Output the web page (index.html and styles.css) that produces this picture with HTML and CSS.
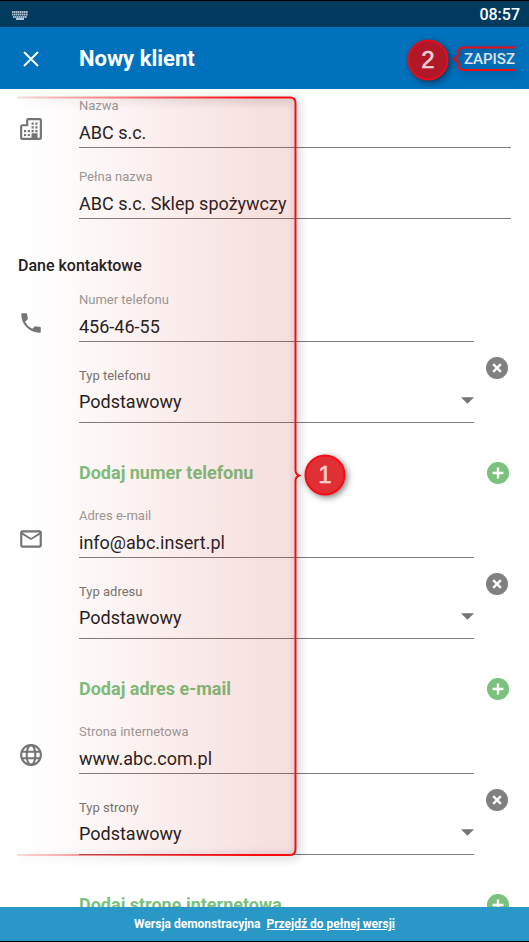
FILE: index.html
```html
<!DOCTYPE html>
<html lang="pl">
<head>
<meta charset="utf-8">
<meta name="viewport" content="width=device-width, initial-scale=1">
<title>Nowy klient</title>
<link rel="stylesheet" href="styles.css">
</head>
<body>
<div class="status">
  <svg class="keyboard" viewBox="0 0 16 9" aria-hidden="true">
    <path d="M0 1h16M0 3.5h16M1 6h14" stroke="#a9bccb" stroke-width="1.8" stroke-dasharray="1.600 .4"/>
    <path d="M4 8h8" stroke="#e5ecf0" stroke-width="1.6"/>
  </svg>
  <time>08:57</time>
</div>

<form class="screen">
  <header class="bar">
    <button type="button" class="close" aria-label="Zamknij">
      <svg viewBox="0 0 16 16"><path d="M1 1l14 14M15 1L1 15" stroke="#fff" stroke-width="2"/></svg>
    </button>
    <h1>Nowy klient</h1>
    <button type="submit" class="save">ZAPISZ</button>
    <svg class="callout callout-save" viewBox="0 0 124 62" aria-hidden="true">
      <path class="callout-line" d="M113 20.500H61Q56 20.500 55 25V28Q54 31.500 50 32Q54 32.500 55 36V38Q56 43 61 43H113"/>
      <circle class="callout-dot callout-dot-dark" cx="25" cy="33" r="19.500"/>
      <text class="callout-number callout-number-dark" x="25" y="41">2</text>
    </svg>
  </header>

  <main class="content">
    <section class="group wide">
      <svg class="icon" viewBox="0 0 24 24" aria-hidden="true">
        <path d="M8.500 8.500V4Q8.500 2.900 9.600 2.900H20Q21.100 2.900 21.100 4V20Q21.100 21.100 20 21.100H4Q2.900 21.100 2.900 20V10Q2.900 8.500 4 8.500H8.500Z" fill="none" stroke="currentColor" stroke-width="2"/>
        <path d="M12.500 6h2v2h-2zM16 6h2v2h-2zM12.500 9.500h2v2h-2zM16 9.500h2v2h-2zM5.500 13h2v2h-2zM9 13h2v2H9zM12.500 13h2v2h-2zM16 13h2v2h-2zM5.500 16.500h2v2h-2zM9 16.500h2v2H9zM12.500 16h5.500V21h-5.500z" fill="currentColor"/>
      </svg>
      <div class="field">
        <label for="name">Nazwa</label>
        <input id="name" type="text" value="ABC s.c.">
      </div>
      <div class="field next">
        <label for="full">Pełna nazwa</label>
        <input id="full" type="text" value="ABC s.c. Sklep spożywczy">
      </div>
    </section>

    <h2>Dane kontaktowe</h2>

    <section class="group">
      <svg class="icon" viewBox="0 0 24 24" aria-hidden="true"><path fill="currentColor" d="M6.620 10.790c1.440 2.830 3.760 5.140 6.590 6.590l2.200-2.200c.27-.27.67-.36 1.020-.24 1.120.37 2.330.57 3.570.57.55 0 1 .45 1 1V20c0 .55-.45 1-1 1-9.390 0-17-7.610-17-17 0-.55.45-1 1-1h3.500c.55 0 1 .45 1 1 0 1.250.2 2.450.57 3.570.11.35.03.74-.25 1.020l-2.200 2.200z"/></svg>
      <div class="field">
        <label for="phone">Numer telefonu</label>
        <input id="phone" type="tel" value="456-46-55">
      </div>
      <div class="field choice">
        <label for="phone-type">Typ telefonu</label>
        <select id="phone-type"><option>Podstawowy</option></select>
        <svg class="arrow" viewBox="0 0 12 6" aria-hidden="true"><path d="M0 0h12L6 6z" fill="currentColor"/></svg>
      </div>
      <button type="button" class="remove" aria-label="Usuń numer telefonu">
        <svg viewBox="0 0 24 24"><circle cx="12" cy="12" r="10.200" fill="#808080"/><path d="M8.500 8.500l7 7M15.500 8.500l-7 7" stroke="#fff" stroke-width="2.200"/></svg>
      </button>
      <button type="button" class="add">Dodaj numer telefonu
        <svg viewBox="0 0 24 24" aria-hidden="true"><circle cx="12" cy="12" r="10.200" fill="#7bc17e"/><path d="M12 7v10M7 12h10" stroke="#fff" stroke-width="2.200"/></svg>
      </button>
    </section>

    <section class="group">
      <svg class="icon" viewBox="0 0 24 24" aria-hidden="true"><path fill="currentColor" d="M20 4H4c-1.100 0-2 .9-2 2v12c0 1.100.9 2 2 2h16c1.100 0 2-.9 2-2V6c0-1.100-.9-2-2-2zm0 14H4V8l8 5 8-5v10zm-8-7L4 6h16l-8 5z"/></svg>
      <div class="field">
        <label for="mail">Adres e-mail</label>
        <input id="mail" type="email" value="info@abc.insert.pl">
      </div>
      <div class="field choice">
        <label for="mail-type">Typ adresu</label>
        <select id="mail-type"><option>Podstawowy</option></select>
        <svg class="arrow" viewBox="0 0 12 6" aria-hidden="true"><path d="M0 0h12L6 6z" fill="currentColor"/></svg>
      </div>
      <button type="button" class="remove" aria-label="Usuń adres e-mail">
        <svg viewBox="0 0 24 24"><circle cx="12" cy="12" r="10.200" fill="#808080"/><path d="M8.500 8.500l7 7M15.500 8.500l-7 7" stroke="#fff" stroke-width="2.200"/></svg>
      </button>
      <button type="button" class="add">Dodaj adres e-mail
        <svg viewBox="0 0 24 24" aria-hidden="true"><circle cx="12" cy="12" r="10.200" fill="#7bc17e"/><path d="M12 7v10M7 12h10" stroke="#fff" stroke-width="2.200"/></svg>
      </button>
    </section>

    <section class="group">
      <svg class="icon" viewBox="0 0 24 24" aria-hidden="true"><g fill="none" stroke="currentColor" stroke-width="1.900"><circle cx="12" cy="12" r="9.100"/><ellipse cx="12" cy="12" rx="4" ry="9.100"/><path d="M3.500 9h17M3.500 15h17"/></g></svg>
      <div class="field">
        <label for="web">Strona internetowa</label>
        <input id="web" type="text" value="www.abc.com.pl">
      </div>
      <div class="field choice">
        <label for="web-type">Typ strony</label>
        <select id="web-type"><option>Podstawowy</option></select>
        <svg class="arrow" viewBox="0 0 12 6" aria-hidden="true"><path d="M0 0h12L6 6z" fill="currentColor"/></svg>
      </div>
      <button type="button" class="remove" aria-label="Usuń stronę internetową">
        <svg viewBox="0 0 24 24"><circle cx="12" cy="12" r="10.200" fill="#808080"/><path d="M8.500 8.500l7 7M15.500 8.500l-7 7" stroke="#fff" stroke-width="2.200"/></svg>
      </button>
      <button type="button" class="add">Dodaj stronę internetową
        <svg viewBox="0 0 24 24" aria-hidden="true"><circle cx="12" cy="12" r="10.200" fill="#7bc17e"/><path d="M12 7v10M7 12h10" stroke="#fff" stroke-width="2.200"/></svg>
      </button>
    </section>

    <svg class="callout callout-form" viewBox="0 0 360 790" aria-hidden="true">
      <defs>
        <linearGradient id="wash" gradientUnits="userSpaceOnUse" x1="17" y1="0" x2="296" y2="0">
          <stop offset="0" stop-color="#c8352b" stop-opacity="0"/>
          <stop offset=".17" stop-color="#c8352b" stop-opacity=".02"/>
          <stop offset=".9" stop-color="#c8352b" stop-opacity=".15"/>
          <stop offset="1" stop-color="#c8352b" stop-opacity=".15"/>
        </linearGradient>
        <linearGradient id="edge" gradientUnits="userSpaceOnUse" x1="17" y1="0" x2="296" y2="0">
          <stop offset="0" stop-color="#fb0a10" stop-opacity=".15"/>
          <stop offset=".85" stop-color="#fb0a10"/>
        </linearGradient>
      </defs>
      <path fill="url(#wash)" d="M17 8.500H290Q295.500 8.500 295.500 14V760Q295.500 766 290 766H17Z"/>
      <path class="callout-line" stroke="url(#edge)" d="M17 8.500H290Q295.500 8.500 295.500 14V381Q295.500 385 299 386.500Q295.500 388 295.500 392V760Q295.500 766 290 766H17"/>
      <circle class="callout-dot" cx="325" cy="386" r="19.500"/>
      <text class="callout-number" x="325" y="394">1</text>
    </svg>
  </main>
</form>

<footer class="demo">
  <span>Wersja demonstracyjna</span>
  <a href="#">Przejdź do pełnej wersji</a>
</footer>
</body>
</html>
```
FILE: styles.css
```css
* {
  box-sizing: border-box;
}

body {
  margin: 0;
  height: 100vh;
  display: flex;
  flex-direction: column;
  background: #fff;
  color: #212121;
  font-family: Roboto, sans-serif;
  font-size: 18px;
  line-height: 20px;
}

h1,
h2 {
  margin: 0;
}

button {
  border: 0;
  padding: 0;
  background: none;
  font: inherit;
  cursor: pointer;
}

svg {
  display: block;
}

.status {
  flex: none;
  display: flex;
  align-items: center;
  justify-content: space-between;
  height: 27px;
  padding: 2px 9px 0 12px;
  border-top: 1px solid #000;
  background: #003a5d;
  color: #fff;
  font-size: 16px;
  font-weight: 500;
}

.keyboard {
  width: 16px;
  height: 9px;
}

.screen {
  flex: 1;
  min-height: 0;
  display: flex;
  flex-direction: column;
}

.bar {
  position: relative;
  flex: none;
  display: flex;
  align-items: center;
  height: 62px;
  padding: 2px 14px 0 23px;
  background: #0071bc;
  color: #fff;
}

.close {
  width: 56px;
}

.close svg {
  width: 16px;
  height: 16px;
}

h1 {
  flex: 1;
  font-size: 22px;
  line-height: 28px;
  font-weight: 700;
}

.save {
  color: #e8e8f0;
  font-size: 15px;
  font-weight: 500;
}

.content {
  position: relative;
  flex: 1;
  min-height: 0;
  padding: 9px 18px;
  overflow-y: auto;
  scrollbar-width: none;
}

h2 {
  margin: 37px 0 16px;
  font-size: 16px;
  line-height: 20px;
  font-weight: 500;
}

.group {
  display: grid;
  grid-template-columns: 61px 1fr 37px;
}

.icon {
  grid-row: 1;
  width: 26px;
  height: 26px;
  margin-top: 18px;
  color: #757575;
}

.field {
  position: relative;
  grid-column: 2;
  display: flex;
  flex-direction: column;
}

.wide .field {
  grid-column: 2 / 4;
}

.field label {
  color: #9a9a9a;
  font-size: 13px;
  line-height: 16px;
}

.field input,
.field select {
  width: 100%;
  margin: 0;
  border: 0;
  border-bottom: 1px solid #7c7c7c;
  border-radius: 0;
  background: none;
  color: inherit;
  font: inherit;
  outline: 0;
}

.field input {
  height: 34px;
  padding: 8px 0 5px;
}

.field select {
  height: 39px;
  padding: 8px 20px 10px 0;
  appearance: none;
}

.next {
  margin-top: 21px;
}

.choice {
  margin-top: 26px;
}

.choice label {
  color: #757575;
}

.arrow {
  position: absolute;
  right: 0;
  bottom: 19px;
  width: 13px;
  height: 7px;
  color: #757575;
  pointer-events: none;
}

.remove {
  grid-column: 3;
  grid-row: 1 / 3;
  align-self: center;
  justify-self: end;
  padding: 21px 1px 0 0;
}

.remove svg,
.add svg {
  width: 26px;
  height: 26px;
}

.add {
  grid-column: 2 / 4;
  display: flex;
  align-items: center;
  justify-content: space-between;
  height: 40px;
  margin: 30px 0 15px;
  color: #7bc17e;
  font-weight: 700;
}

.callout {
  position: absolute;
  pointer-events: none;
}

.callout-save {
  top: 0;
  right: 2px;
  width: 124px;
  height: 62px;
}

.callout-form {
  top: 0;
  left: 0;
  width: 360px;
  height: 790px;
}

.callout-line {
  fill: none;
  stroke-width: 2;
  filter: drop-shadow(2px 2px 4px rgba(0, 0, 0, 0.45));
}

.callout-save .callout-line {
  stroke: #f00a15;
}

.callout-dot {
  fill: #e03035;
  stroke: #fb0a10;
  stroke-width: 2;
  filter: drop-shadow(2px 2px 3px rgba(0, 0, 0, 0.5));
}

.callout-dot-dark {
  fill: #b01828;
  stroke: #ea0b17;
}

.callout-number {
  fill: #fbd0d0;
  stroke: #fbd0d0;
  stroke-width: 0.6;
  font-family: "Liberation Sans", sans-serif;
  font-size: 24px;
  text-anchor: middle;
}

.callout-number-dark {
  fill: #edd0d3;
  stroke: #edd0d3;
}

.demo {
  flex: none;
  display: flex;
  align-items: center;
  justify-content: center;
  gap: 6px;
  height: 35px;
  border-bottom: 1px solid #000;
  background: #2a98c6;
  color: #fff;
  font-size: 12px;
  font-weight: 700;
}

.demo a {
  color: inherit;
}
```
